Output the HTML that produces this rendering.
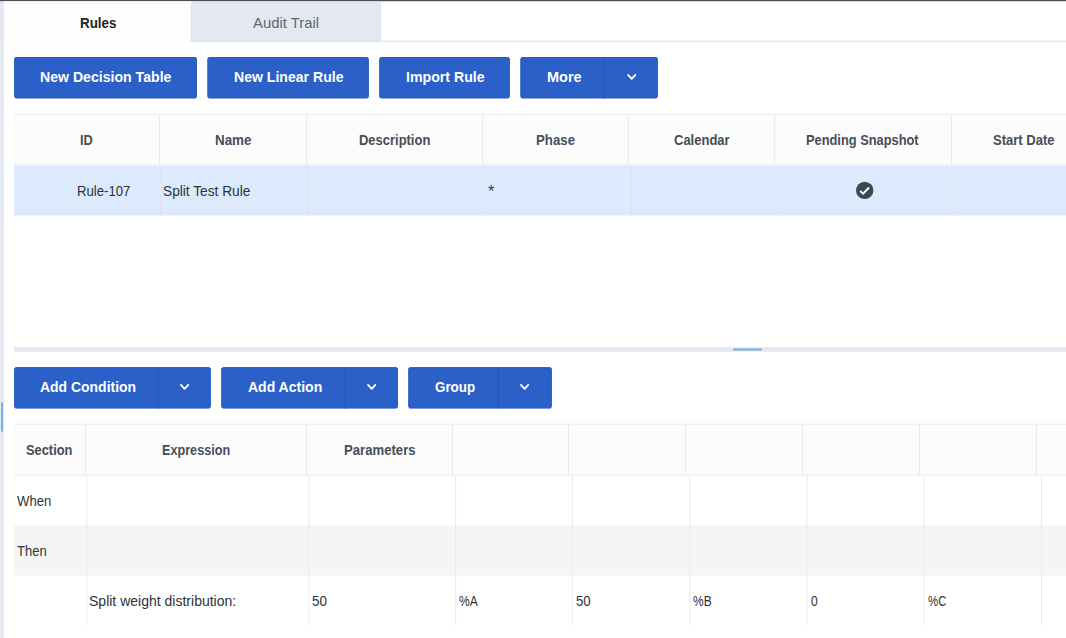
<!DOCTYPE html><html><head><meta charset="utf-8"><title>Rules</title><style>
*{margin:0;padding:0;box-sizing:border-box}
html,body{width:1066px;height:638px;overflow:hidden;background:#fff;font-family:"Liberation Sans",sans-serif}
.a{position:absolute}
.m{position:absolute;white-space:nowrap;transform-origin:0 50%;line-height:20px;height:20px}
.btn{position:absolute;background:#2b60c9;border:1px solid #2959c0;border-radius:2px;height:41.3px}
.dv{position:absolute;top:-1px;bottom:-1px;width:1px;background:#2656ba}
.vl{position:absolute;width:1px;background:#e8ebf3}
.hl{position:absolute;height:1px;background:#e8ebf3}
svg{position:absolute;overflow:visible}
</style></head><body>
<svg width="1066" height="638" viewBox="0 0 1066 638" style="left:0;top:0"><rect x="0" y="0" width="4" height="638" fill="#e4e8f0"/><rect x="4" y="1" width="1062" height="1.4" fill="#eef1f5"/><rect x="0" y="0" width="1066" height="1.15" fill="#4a4e54"/><rect x="1" y="402.5" width="2" height="29.1" fill="#6db5ec"/><rect x="4" y="1.2" width="187" height="40" fill="#fdfdfd"/><rect x="191" y="40.6" width="875" height="1.2" fill="#dfe5ea"/><path d="M191.5 41.3 V4.7 a2.5 2.5 0 0 1 2.5 -2.5 H378 a2.5 2.5 0 0 1 2.5 2.5 V41.3 Z" fill="#e4e8f0" stroke="#dce1e9" stroke-width="1"/><rect x="14.6" y="57.5" width="181.9" height="40.5" rx="1.6" fill="#2b60c9" stroke="#2959c0" stroke-width="1"/><rect x="207.8" y="57.5" width="160.6" height="40.5" rx="1.6" fill="#2b60c9" stroke="#2959c0" stroke-width="1"/><rect x="379.7" y="57.5" width="129.7" height="40.5" rx="1.6" fill="#2b60c9" stroke="#2959c0" stroke-width="1"/><rect x="520.8" y="57.5" width="136.6" height="40.5" rx="1.6" fill="#2b60c9" stroke="#2959c0" stroke-width="1"/><rect x="603.8" y="57" width="1" height="41.5" fill="#2656ba"/><rect x="14.6" y="367.6" width="195.8" height="40.5" rx="1.6" fill="#2b60c9" stroke="#2959c0" stroke-width="1"/><rect x="157.8" y="367.1" width="1" height="41.5" fill="#2656ba"/><rect x="221.7" y="367.6" width="175.8" height="40.5" rx="1.6" fill="#2b60c9" stroke="#2959c0" stroke-width="1"/><rect x="344.8" y="367.1" width="1" height="41.5" fill="#2656ba"/><rect x="408.7" y="367.6" width="142.7" height="40.5" rx="1.6" fill="#2b60c9" stroke="#2959c0" stroke-width="1"/><rect x="497.8" y="367.1" width="1" height="41.5" fill="#2656ba"/><path d="M628.05 74.9 L631.7 78.8 L635.35 74.9" fill="none" stroke="#fff" stroke-width="1.8" stroke-linecap="round" stroke-linejoin="round"/><path d="M180.95 384.9 L184.6 388.8 L188.25 384.9" fill="none" stroke="#fff" stroke-width="1.8" stroke-linecap="round" stroke-linejoin="round"/><path d="M368.05 384.9 L371.7 388.8 L375.35 384.9" fill="none" stroke="#fff" stroke-width="1.8" stroke-linecap="round" stroke-linejoin="round"/><path d="M520.95 384.9 L524.6 388.8 L528.25 384.9" fill="none" stroke="#fff" stroke-width="1.8" stroke-linecap="round" stroke-linejoin="round"/><rect x="14.1" y="113.75" width="1066" height="51.7" fill="#fcfcfd"/><rect x="14.1" y="113.75" width="1066" height="1" fill="#e8ebf3"/><rect x="14.1" y="164.5" width="1066" height="1" fill="#e8ebf3"/><rect x="14.1" y="165.5" width="1066" height="50" fill="#dde9fd"/><rect x="159" y="114" width="1" height="51" fill="#e8ebf3"/><rect x="306" y="114" width="1" height="51" fill="#e8ebf3"/><rect x="482" y="114" width="1" height="51" fill="#e8ebf3"/><rect x="628" y="114" width="1" height="51" fill="#e8ebf3"/><rect x="774" y="114" width="1" height="51" fill="#e8ebf3"/><rect x="951" y="114" width="1" height="51" fill="#e8ebf3"/><rect x="160" y="165.5" width="1" height="50" fill="#dbe4f4"/><rect x="308" y="165.5" width="1" height="50" fill="#dbe4f4"/><rect x="485" y="165.5" width="1" height="50" fill="#dbe4f4"/><rect x="631" y="165.5" width="1" height="50" fill="#dbe4f4"/><rect x="777" y="165.5" width="1" height="50" fill="#dbe4f4"/><rect x="954" y="165.5" width="1" height="50" fill="#dbe4f4"/><circle cx="864.7" cy="190.35" r="8.7" fill="#3e4650"/><path d="M860.1 190.9 L863.1 193.7 L869.1 187.5" fill="none" stroke="#fff" stroke-width="1.95"/><rect x="14.1" y="347" width="1066" height="4.8" fill="#e4e8f0"/><rect x="733" y="348.65" width="29" height="1.75" fill="#5eadea"/><rect x="14.1" y="423.75" width="1066" height="51.7" fill="#fcfcfd"/><rect x="14.1" y="423.75" width="1066" height="1" fill="#e8ebf3"/><rect x="14.1" y="474.5" width="1066" height="1" fill="#e8ebf3"/><rect x="85.1" y="424" width="1" height="51" fill="#e8ebf3"/><rect x="306.05" y="424" width="1" height="51" fill="#e8ebf3"/><rect x="452.05" y="424" width="1" height="51" fill="#e8ebf3"/><rect x="568.05" y="424" width="1" height="51" fill="#e8ebf3"/><rect x="685.05" y="424" width="1" height="51" fill="#e8ebf3"/><rect x="802.05" y="424" width="1" height="51" fill="#e8ebf3"/><rect x="919.05" y="424" width="1" height="51" fill="#e8ebf3"/><rect x="1036.05" y="424" width="1" height="51" fill="#e8ebf3"/><rect x="14.1" y="525.6" width="1066" height="50" fill="#f5f5f6"/><rect x="86.2" y="475.5" width="1" height="150.2" fill="#e8ebf3"/><rect x="308.2" y="475.5" width="1" height="150.2" fill="#e8ebf3"/><rect x="455.1" y="475.5" width="1" height="150.2" fill="#e8ebf3"/><rect x="572" y="475.5" width="1" height="150.2" fill="#e8ebf3"/><rect x="689.25" y="475.5" width="1" height="150.2" fill="#e8ebf3"/><rect x="806.5" y="475.5" width="1" height="150.2" fill="#e8ebf3"/><rect x="923.75" y="475.5" width="1" height="150.2" fill="#e8ebf3"/><rect x="1041" y="475.5" width="1" height="150.2" fill="#e8ebf3"/></svg>
<span class="m" id="t_rules" style="left:79.6px;top:12.74px;font-size:14.6px;font-weight:bold;color:#1f2226;transform:scaleX(0.9182)">Rules</span>
<span class="m" id="t_audit" style="left:252.9px;top:12.84px;font-size:14.6px;font-weight:normal;color:#5f6772;transform:scaleX(1.0171)">Audit Trail</span>
<span class="m" id="b1" style="left:40.1px;top:66.87px;font-size:14.8px;font-weight:bold;color:#fff;transform:scaleX(0.9530)">New Decision Table</span>
<span class="m" id="b2" style="left:233.7px;top:66.87px;font-size:14.8px;font-weight:bold;color:#fff;transform:scaleX(0.9511)">New Linear Rule</span>
<span class="m" id="b3" style="left:405.7px;top:66.87px;font-size:14.8px;font-weight:bold;color:#fff;transform:scaleX(0.9560)">Import Rule</span>
<span class="m" id="b4" style="left:547.3px;top:66.87px;font-size:14.8px;font-weight:bold;color:#fff;transform:scaleX(0.9785)">More</span>
<span class="m" id="h1" style="left:80.0px;top:129.88px;font-size:14.2px;font-weight:bold;color:#474e58;transform:scaleX(0.9022)">ID</span>
<span class="m" id="h2" style="left:214.85px;top:129.88px;font-size:14.2px;font-weight:bold;color:#474e58;transform:scaleX(0.9429)">Name</span>
<span class="m" id="h3" style="left:358.7px;top:129.88px;font-size:14.2px;font-weight:bold;color:#474e58;transform:scaleX(0.9136)">Description</span>
<span class="m" id="h4" style="left:535.8px;top:129.88px;font-size:14.2px;font-weight:bold;color:#474e58;transform:scaleX(0.9327)">Phase</span>
<span class="m" id="h5" style="left:673.5px;top:129.88px;font-size:14.2px;font-weight:bold;color:#474e58;transform:scaleX(0.9157)">Calendar</span>
<span class="m" id="h6" style="left:806.3px;top:129.88px;font-size:14.2px;font-weight:bold;color:#474e58;transform:scaleX(0.9041)">Pending Snapshot</span>
<span class="m" id="h7" style="left:993.2px;top:129.88px;font-size:14.2px;font-weight:bold;color:#474e58;transform:scaleX(0.9190)">Start Date</span>
<span class="m" id="r1" style="left:76.6px;top:180.88px;font-size:14.2px;font-weight:normal;color:#2e3238;transform:scaleX(0.9274)">Rule-107</span>
<span class="m" id="r2" style="left:163.0px;top:180.88px;font-size:14.2px;font-weight:normal;color:#2e3238;transform:scaleX(0.9664)">Split Test Rule</span>
<span class="m" id="r3" style="left:487.8px;top:182.31px;font-size:17px;font-weight:normal;color:#3a3f47;transform:scaleX(0.9660)">*</span>
<span class="m" id="c1" style="left:39.6px;top:376.57px;font-size:14.8px;font-weight:bold;color:#fff;transform:scaleX(0.9430)">Add Condition</span>
<span class="m" id="c2" style="left:248.2px;top:376.57px;font-size:14.8px;font-weight:bold;color:#fff;transform:scaleX(0.9469)">Add Action</span>
<span class="m" id="c3" style="left:435.3px;top:376.57px;font-size:14.8px;font-weight:bold;color:#fff;transform:scaleX(0.9033)">Group</span>
<span class="m" id="g1" style="left:25.9px;top:439.78px;font-size:14.2px;font-weight:bold;color:#474e58;transform:scaleX(0.9054)">Section</span>
<span class="m" id="g2" style="left:161.8px;top:439.78px;font-size:14.2px;font-weight:bold;color:#474e58;transform:scaleX(0.8915)">Expression</span>
<span class="m" id="g3" style="left:343.5px;top:439.78px;font-size:14.2px;font-weight:bold;color:#474e58;transform:scaleX(0.9261)">Parameters</span>
<span class="m" id="w1" style="left:16.5px;top:490.98px;font-size:14.2px;font-weight:normal;color:#2e3238;transform:scaleX(0.9255)">When</span>
<span class="m" id="w2" style="left:16.9px;top:540.98px;font-size:14.2px;font-weight:normal;color:#2e3238;transform:scaleX(0.9183)">Then</span>
<span class="m" id="w3" style="left:89.3px;top:590.98px;font-size:14.2px;font-weight:normal;color:#2e3238;transform:scaleX(0.9876)">Split weight distribution:</span>
<span class="m" id="p1" style="left:311.75px;top:590.98px;font-size:14.2px;font-weight:normal;color:#2e3238;transform:scaleX(0.9473)">50</span>
<span class="m" id="p2" style="left:458.5px;top:590.98px;font-size:14.2px;font-weight:normal;color:#2e3238;transform:scaleX(0.8515)">%A</span>
<span class="m" id="p3" style="left:576.2px;top:590.98px;font-size:14.2px;font-weight:normal;color:#2e3238;transform:scaleX(0.9315)">50</span>
<span class="m" id="p4" style="left:693.4px;top:590.98px;font-size:14.2px;font-weight:normal;color:#2e3238;transform:scaleX(0.8425)">%B</span>
<span class="m" id="p5" style="left:810.5px;top:590.98px;font-size:14.2px;font-weight:normal;color:#2e3238;transform:scaleX(0.8491)">0</span>
<span class="m" id="p6" style="left:927.9px;top:590.98px;font-size:14.2px;font-weight:normal;color:#2e3238;transform:scaleX(0.8044)">%C</span>
</body></html>
